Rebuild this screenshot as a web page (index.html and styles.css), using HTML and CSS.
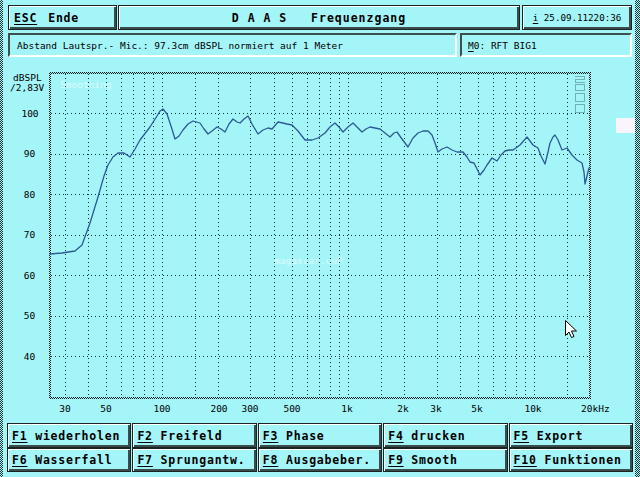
FILE: index.html
```html
<!DOCTYPE html>
<html lang="de">
<head>
<meta charset="utf-8">
<title>DAAS Frequenzgang</title>
<link rel="stylesheet" href="styles.css">
</head>
<body>
<div class="screen">
  <div class="edge edge-left"></div>
  <main class="main">
    <header class="toprow">
      <div class="box raised esc bold"><span class="u">ESC</span><span class="ende">Ende</span></div>
      <div class="box raised title bold"><span class="title-text">D A A S   Frequenzgang</span></div>
      <div class="box raised date small"><span><span class="u">i</span> 25.09.11220:36</span></div>
    </header>
    <div class="inforow">
      <div class="box sunken info small">Abstand Lautspr.- Mic.: 97.3cm dBSPL normiert auf 1 Meter</div>
      <div class="box sunken model small"><span><span class="u">M</span>0: RFT BIG1</span></div>
    </div>
    <div class="chart">
      <svg width="632" height="366" viewBox="3 57 632 366" xmlns="http://www.w3.org/2000/svg">
        <defs>
          <pattern id="chk" width="2" height="2" patternUnits="userSpaceOnUse">
            <rect width="1" height="1" fill="#101c1c"/>
            <rect x="1" y="1" width="1" height="1" fill="#101c1c"/>
          </pattern>
        </defs>
        <g class="axis">
          <text x="13" y="81">dBSPL</text>
          <text x="10" y="90.5">/2,83V</text>
          <g text-anchor="middle">
            <text x="30" y="116.5">100</text>
            <text x="29.5" y="157">90</text>
            <text x="29.5" y="197.5">80</text>
            <text x="29.5" y="238">70</text>
            <text x="29.5" y="278.5">60</text>
            <text x="29.5" y="319">50</text>
            <text x="29.5" y="359.5">40</text>
            <text x="65" y="411.5">30</text>
            <text x="106" y="411.5">50</text>
            <text x="162" y="411.5">100</text>
            <text x="219" y="411.5">200</text>
            <text x="250" y="411.5">300</text>
            <text x="292" y="411.5">500</text>
            <text x="347" y="411.5">1k</text>
            <text x="403" y="411.5">2k</text>
            <text x="436" y="411.5">3k</text>
            <text x="477" y="411.5">5k</text>
            <text x="533" y="411.5">10k</text>
          </g>
          <text x="581" y="411.5">20kHz</text>
        </g>
        <g class="ghost">
          <text x="60" y="88">Smoothing</text>
          <text x="274" y="264">magassar.cuP</text>
        </g>
        <g class="grid">
          <path d="M51 113.5H589M51 154.5H589M51 194.5H589M51 235.5H589M51 275.5H589M51 316.5H589M51 356.5H589"/>
          <path d="M65.5 74V397M88.5 74V397M106.5 74V397M121.5 74V397M133.5 74V397M144.5 74V397M153.5 74V397M162.5 74V397M195.5 74V397M218.5 74V397M250.5 74V397M274.5 74V397M292.5 74V397M307.5 74V397M319.5 74V397M330.5 74V397M339.5 74V397M348.5 74V397M381.5 74V397M404.5 74V397M437.5 74V397M460.5 74V397M478.5 74V397M493.5 74V397M505.5 74V397M516.5 74V397M525.5 74V397M534.5 74V397M567.5 74V397"/>
        </g>
        <g class="mini">
          <path d="M575.5 76.5h9v3h-9v3h9"/>
          <rect x="575.5" y="84.5" width="9" height="6"/>
          <rect x="575.5" y="93.5" width="9" height="8"/>
          <rect x="575.5" y="104.5" width="9" height="8"/>
        </g>
        <rect x="49" y="72" width="542" height="2" fill="url(#chk)"/>
        <rect x="49" y="397" width="542" height="2" fill="url(#chk)"/>
        <rect x="49" y="72" width="2" height="327" fill="url(#chk)"/>
        <rect x="589" y="72" width="2" height="327" fill="url(#chk)"/>
        <polyline class="curve" points="50,254 62,253 75,251 82,245 90,223 98,197 104,176 108,165 113,157 118,153 124,153 130,157 135,149 140,140 150,127 157,116 160,111 163,109 167,114 171,126 175,139 179,136 183,130 188,124 193,121 200,123 204,129 208,134 212,131 217,127 221,129 225,132 229,124 233,119 237,122 240,123 244,119 248,116 252,124 258,134 263,130 268,128 272,129 278,122 283,123 287,124 292,125 298,131 305,140 312,140 318,138 325,133 330,127 335,123 339,127 343,132 348,127 353,123 357,127 362,132 366,129 370,127 375,128 380,129 385,133 390,137 394,133 397,132 402,139 408,147 413,138 418,133 423,131 428,131 432,135 435,143 438,152 442,149 447,147 452,150 457,152 463,152 467,157 470,162 474,163 477,169 480,175 484,170 487,165 492,158 497,161 501,155 505,151 509,150 513,150 520,145 527,137 530,141 533,145 538,148 541,156 545,164 548,152 550,143 553,137 555,135 558,140 562,150 567,148 572,155 577,160 582,163 584,172 585,184 587,176 589,168"/>
        <rect x="616" y="118" width="19" height="15" fill="#faf5fd"/>
        <path class="cursor" d="M565.5 320.5V335.5L569 332L571.5 337.5L574 336.5L571.5 331H576.5Z"/>
      </svg>
    </div>
    <nav class="fkeys">
      <div class="fkey raised"><span class="u">F1</span> wiederholen</div>
      <div class="fkey raised"><span class="u">F2</span> Freifeld</div>
      <div class="fkey raised"><span class="u">F3</span> Phase</div>
      <div class="fkey raised"><span class="u">F4</span> drucken</div>
      <div class="fkey raised"><span class="u">F5</span> Export</div>
      <div class="fkey raised"><span class="u">F6</span> Wasserfall</div>
      <div class="fkey raised"><span class="u">F7</span> Sprungantw.</div>
      <div class="fkey raised"><span class="u">F8</span> Ausgabeber.</div>
      <div class="fkey raised"><span class="u">F9</span> Smooth</div>
      <div class="fkey raised"><span class="u">F10</span> Funktionen</div>
    </nav>
  </main>
  <div class="edge edge-right"></div>
</div>
</body>
</html>
```
FILE: styles.css
```css
html, body {
  margin: 0;
  padding: 0;
}
body {
  width: 640px;
  height: 477px;
  overflow: hidden;
  background: #a4f5f8;
  color: #000;
  font-family: "DejaVu Sans Mono", "Liberation Mono", monospace;
}
.screen {
  display: flex;
  height: 477px;
}
.edge {
  background: repeating-conic-gradient(#243434 0 25%, #a4f5f8 0 50%) 0 0 / 2px 2px;
}
.edge-left { width: 3px; }
.edge-right { width: 5px; }
.main {
  width: 632px;
  display: flex;
  flex-direction: column;
}
.toprow {
  display: flex;
  height: 25px;
  margin: 5px 3px 0 5px;
}
.inforow {
  display: flex;
  height: 24px;
  margin: 3px 3px 0 5px;
}
.box {
  box-sizing: border-box;
  display: flex;
  align-items: center;
  white-space: pre;
}
.raised {
  border: 1px solid #1a2424;
  box-shadow: inset 1px 1px 0 #fff, inset -2px -2px 0 #3a4c4c;
}
.sunken {
  border-style: solid;
  border-width: 2px;
  border-color: #3c5050 #fff #fff #3c5050;
}
.bold {
  font-weight: bold;
  font-size: 11.5px;
  letter-spacing: 0.8px;
}
.small {
  font-size: 9.5px;
}
.esc {
  width: 109px;
  padding-left: 5px;
}
.ende {
  margin-left: 11px;
}
.title {
  width: 402px;
  margin-left: 1px;
  justify-content: center;
}
.title-text {
  letter-spacing: 1px;
}
.date {
  width: 110px;
  margin-left: 2px;
  justify-content: center;
  font-size: 9.2px;
}
.info {
  width: 449px;
  padding-left: 7px;
}
.model {
  width: 172px;
  margin-left: 3px;
  padding-left: 6px;
}
.u {
  text-decoration: underline;
  text-underline-offset: 2px;
}
.chart {
  height: 366px;
}
.chart svg {
  display: block;
}
.axis {
  font-family: "DejaVu Sans Mono", monospace;
  font-size: 9.5px;
  fill: #000;
}
.ghost {
  font-family: "DejaVu Sans Mono", monospace;
  font-size: 9.5px;
  fill: #dcfbfc;
}
.grid {
  fill: none;
  stroke: #0b3434;
  stroke-width: 1;
  stroke-dasharray: 1 3;
}
.mini {
  fill: none;
  stroke: #3d6e70;
  stroke-width: 1;
  stroke-dasharray: 1 1;
}
.curve {
  fill: none;
  stroke: #2c5a96;
  stroke-width: 1.3;
  stroke-linejoin: round;
  stroke-linecap: round;
}
.cursor {
  fill: #fff;
  stroke: #000;
  stroke-width: 1;
  stroke-linejoin: miter;
}
.fkeys {
  display: grid;
  grid-template-columns: repeat(5, 1fr);
  grid-template-rows: 25px 24px;
  column-gap: 1px;
  width: 626px;
  margin-left: 4px;
}
.fkey {
  box-sizing: border-box;
  display: flex;
  align-items: center;
  padding-left: 4px;
  white-space: pre;
  font-weight: bold;
  font-size: 11.5px;
  letter-spacing: 0.8px;
}
```
